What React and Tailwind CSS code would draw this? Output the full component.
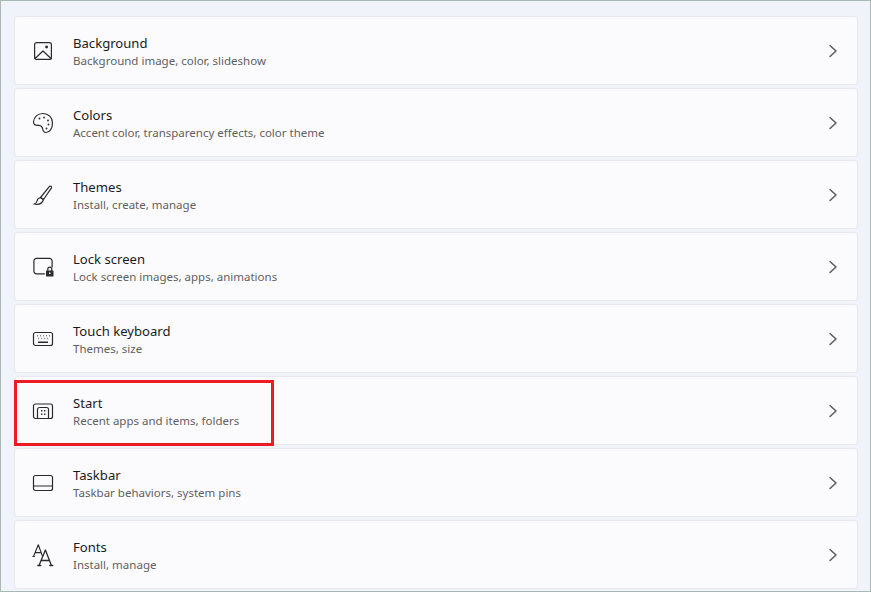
const Svg = ({ children }) => (
  <svg width="24" height="24" viewBox="0 0 24 24" fill="none" stroke="#2a2a2a" strokeWidth="1.2" strokeLinecap="round" strokeLinejoin="round">
    {children}
  </svg>
);

const BackgroundIcon = () => (
  <Svg>
    <rect x="3.600" y="3.600" width="16.800" height="16.800" rx="2" />
    <path d="M4 19.500l8-7.500 8 7.500" />
    <circle cx="15.600" cy="8" r="1.400" fill="#2a2a2a" stroke="none" />
  </Svg>
);

const ColorsIcon = () => (
  <Svg>
    <path d="M2.500 11C2.500 6 7 2.500 12 2.500c5.500 0 9.500 4 9.500 9.500 0 5.500-3 9.500-6.500 9.500-2.500 0-3-1.700-3.300-3.500-.3-2-1.500-3.500-3.700-3.700C5 14.300 2.500 14.500 2.500 11z" />
    <circle cx="8.500" cy="7.500" r="0.900" fill="#2a2a2a" stroke="none" />
    <circle cx="13" cy="6.500" r="0.900" fill="#2a2a2a" stroke="none" />
    <circle cx="17" cy="9.500" r="0.900" fill="#2a2a2a" stroke="none" />
    <circle cx="17.500" cy="13.500" r="0.900" fill="#2a2a2a" stroke="none" />
    <circle cx="15.500" cy="17.500" r="0.900" fill="#2a2a2a" stroke="none" />
  </Svg>
);

const ThemesIcon = () => (
  <Svg>
    <path d="M9.500 14.500L18.500 3.300c.8-.7 2.500.3 2 1.500L12.500 16.500z" />
    <path d="M9.500 14.500c-2.500.3-3.200 2-3.500 3.500-.2 1.200-1.200 2.600-3 3 3.500.8 8 .3 9.500-4.500z" />
  </Svg>
);

const LockScreenIcon = () => (
  <Svg>
    <path d="M13.500 18.800H5.500a2.600 2.600 0 0 1-2.600-2.600V5.900a2.600 2.600 0 0 1 2.600-2.600h13a2.600 2.600 0 0 1 2.600 2.600v6" />
    <rect x="15" y="15.500" width="7.500" height="6" rx="0.600" fill="#2a2a2a" stroke="none" />
    <path d="M16.800 15.500v-1.300a2 2 0 0 1 4 0v1.300" />
    <rect x="18" y="17.500" width="1.500" height="1.500" fill="#fbfbfd" stroke="none" />
  </Svg>
);

const KeyboardIcon = () => (
  <Svg>
    <rect x="2.500" y="5.500" width="19" height="13" rx="2" />
    <path d="M6 8.700h.6M9 8.700h.6M12 8.700h.6M15 8.700h.6M18 8.700h.6M7.500 11.500h.6M10.500 11.500h.6M13.500 11.500h.6M16.500 11.500h.6M7 15.300h10" strokeWidth="1.400" strokeLinecap="butt" />
  </Svg>
);

const StartIcon = () => (
  <Svg>
    <rect x="2.500" y="5" width="19" height="14.500" rx="2" />
    <path d="M6.500 19.500v-9a2 2 0 0 1 2-2h7a2 2 0 0 1 2 2v9" />
    <path d="M10 11h1.400v1.400H10zM13 11h1.400v1.400H13zM10 14.500h1.400v1.400H10zM13 14.500h1.400v1.400H13z" fill="#2a2a2a" stroke="none" />
  </Svg>
);

const TaskbarIcon = () => (
  <Svg>
    <rect x="2.500" y="4.500" width="19" height="15" rx="2" />
    <path d="M2.500 15h19" />
  </Svg>
);

const FontsIcon = () => (
  <Svg>
    <path d="M2.500 13.500L7.300 1.800l4.300 11.700M4.200 9.600h5.800M1.800 13.500h1.600" strokeWidth="1.100" />
    <path d="M8 22.500L14.400 7l6 15.500M10 17.500h8.500M6.800 22.500h3M18.800 22.500h3" strokeWidth="1.300" />
  </Svg>
);

const Chevron = () => (
  <svg width="10" height="14" viewBox="0 0 10 14" fill="none" stroke="#5a5a5a" strokeWidth="1.500" strokeLinecap="round" strokeLinejoin="round">
    <path d="M2 1.500L8 7l-6 5.500" />
  </svg>
);

const items = [
  { title: 'Background', sub: 'Background image, color, slideshow', Icon: BackgroundIcon },
  { title: 'Colors', sub: 'Accent color, transparency effects, color theme', Icon: ColorsIcon },
  { title: 'Themes', sub: 'Install, create, manage', Icon: ThemesIcon },
  { title: 'Lock screen', sub: 'Lock screen images, apps, animations', Icon: LockScreenIcon },
  { title: 'Touch keyboard', sub: 'Themes, size', Icon: KeyboardIcon },
  { title: 'Start', sub: 'Recent apps and items, folders', Icon: StartIcon, highlight: true },
  { title: 'Taskbar', sub: 'Taskbar behaviors, system pins', Icon: TaskbarIcon },
  { title: 'Fonts', sub: 'Install, manage', Icon: FontsIcon },
];

const Row = ({ title, sub, Icon, highlight }) => (
  <div className="relative flex h-[69px] items-center rounded-[4px] border border-[#e5e8ee] bg-[#fbfbfd] pl-4 pr-[19px]">
    <div className="flex w-6 shrink-0 items-center justify-center">
      <Icon />
    </div>
    <div className="ml-[18px] flex-1 pt-[2px]">
      <p className="text-[13.1px] leading-[18px] text-[#1b1b1b]">{title}</p>
      <p className="text-[11.5px] leading-[17px] text-[#5f5f5f]">{sub}</p>
    </div>
    <Chevron />
    {highlight && (
      <div className="absolute left-[-1px] top-[3px] h-[66px] w-[260px] border-[3px] border-[#ed1c24]" />
    )}
  </div>
);

export default function App() {
  return (
    <div
      className="h-[592px] w-[871px] overflow-hidden border border-[#a9b8b4] bg-[#f0f3f9] pl-[13px] pr-3 pt-[15px]"
      style={{ fontFamily: '"Noto Sans", "Open Sans", sans-serif' }}
    >
      <div className="flex flex-col gap-[3px]">
        {items.map((item) => (
          <Row key={item.title} {...item} />
        ))}
      </div>
    </div>
  );
}
